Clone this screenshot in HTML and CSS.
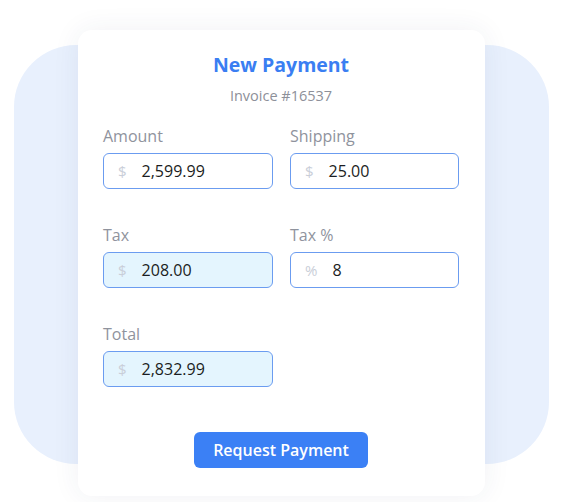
FILE: index.html
```html
<!DOCTYPE html>
<html>
<head>
<meta charset="utf-8">
<link rel="stylesheet" href="styles.css">
</head>
<body>
<div class="stage">
  <div class="backdrop"></div>
  <div class="card">
    <h1 class="title">New Payment</h1>
    <p class="subtitle">Invoice #16537</p>
    <div class="fields">
      <div class="field">
        <label class="label">Amount</label>
        <div class="input"><span class="prefix">$</span><span class="value">2,599.99</span></div>
      </div>
      <div class="field">
        <label class="label">Shipping</label>
        <div class="input"><span class="prefix">$</span><span class="value">25.00</span></div>
      </div>
      <div class="field">
        <label class="label">Tax</label>
        <div class="input computed"><span class="prefix">$</span><span class="value">208.00</span></div>
      </div>
      <div class="field">
        <label class="label">Tax %</label>
        <div class="input"><span class="prefix">%</span><span class="value">8</span></div>
      </div>
      <div class="field">
        <label class="label">Total</label>
        <div class="input computed"><span class="prefix">$</span><span class="value">2,832.99</span></div>
      </div>
    </div>
    <div class="actions">
      <button class="button">Request Payment</button>
    </div>
  </div>
</div>
</body>
</html>
```
FILE: styles.css
```css
* { box-sizing: border-box; }
html, body { margin: 0; background: #ffffff; }
body {
  width: 582px;
  height: 502px;
  overflow: hidden;
  font-family: "Open Sans", "Lato", sans-serif;
}
.stage {
  display: grid;
  padding: 30px 0 0 14px;
  grid-template-columns: 64px 407px 64px;
  grid-template-rows: 15px 419px 32px;
}
.backdrop {
  grid-column: 1 / 4;
  grid-row: 2;
  background: #e8f0fd;
  border-radius: 62px;
}
.card {
  grid-column: 2;
  grid-row: 1 / 4;
  background: #ffffff;
  border-radius: 14px;
  box-shadow: 0 0 28px rgba(40, 60, 100, 0.07);
  padding: 23px 26px 28px 25px;
  display: flex;
  flex-direction: column;
}
.title {
  margin: 0;
  text-align: center;
  font-size: 19.5px;
  line-height: 24px;
  font-weight: 700;
  color: #3a7ef2;
}
.subtitle {
  margin: 11px 0 0;
  text-align: center;
  font-size: 14.5px;
  line-height: 16px;
  color: #8d9099;
}
.fields {
  margin-top: 23px;
  display: grid;
  grid-template-columns: 170px 169px;
  column-gap: 17px;
  row-gap: 37px;
}
.field {
  display: flex;
  flex-direction: column;
  gap: 8px;
}
.label {
  font-size: 16px;
  line-height: 18px;
  color: #8f939d;
}
.input {
  height: 36px;
  border: 1px solid #6b9cf0;
  border-radius: 6px;
  background: #ffffff;
  display: flex;
  align-items: center;
  padding-left: 14px;
  gap: 15px;
}
.input.computed {
  background: #e4f5fe;
}
.prefix {
  font-size: 15px;
  color: #c9ced8;
}
.value {
  font-size: 16px;
  color: #1b1d22;
}
.actions {
  margin-top: 45px;
  display: flex;
  justify-content: center;
}
.button {
  width: 174px;
  height: 36px;
  border: none;
  border-radius: 6px;
  background: #3b80f5;
  color: #ffffff;
  font-family: inherit;
  font-size: 16px;
  font-weight: 600;
  cursor: pointer;
}
```
